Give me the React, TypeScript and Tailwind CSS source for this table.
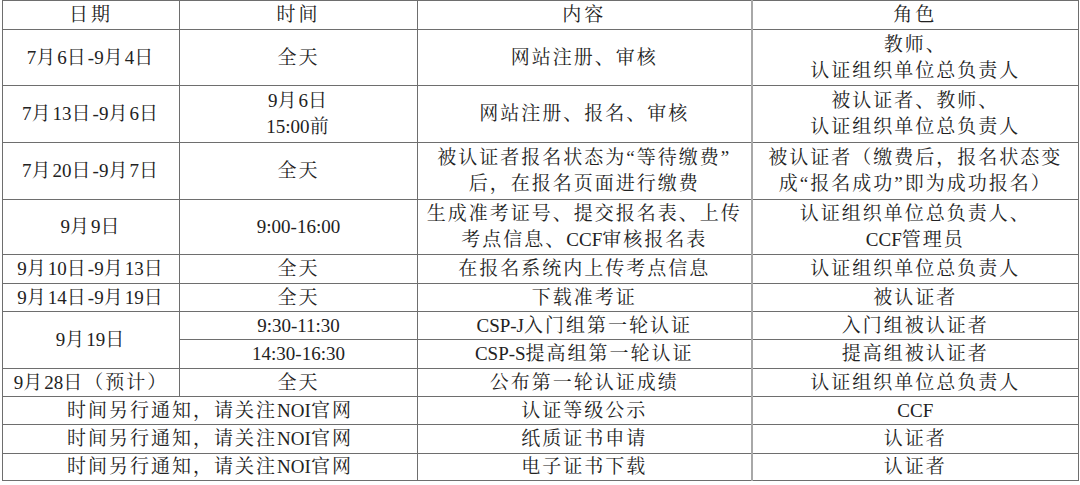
import React from 'react';

type Cell = {
  lines: string[];
  colSpan?: number;
  rowSpan?: number;
};

type Row = { h: string; cells: Cell[] };

const td = 'border border-[#6e6e6e] text-center align-middle p-0 leading-[26px] whitespace-nowrap';

// latin runs keep normal spacing, CJK gets the wide Word-like tracking
const renderLine = (line: string) =>
  line.split(/([A-Za-z0-9:\-]+)/).map((part, k) =>
    /^[A-Za-z0-9:\-]+$/.test(part) ? (
      <span key={k} className="tracking-normal">
        {part}
      </span>
    ) : (
      <span key={k} className="tracking-[2px]">
        {part}
      </span>
    )
  );

const rows: Row[] = [
  {
    h: 'h-[56px]',
    cells: [
      { lines: ['7月6日-9月4日'] },
      { lines: ['全天'] },
      { lines: ['网站注册、审核'] },
      { lines: ['教师、', '认证组织单位总负责人'] },
    ],
  },
  {
    h: 'h-[57px]',
    cells: [
      { lines: ['7月13日-9月6日'] },
      { lines: ['9月6日', '15:00前'] },
      { lines: ['网站注册、报名、审核'] },
      { lines: ['被认证者、教师、', '认证组织单位总负责人'] },
    ],
  },
  {
    h: 'h-[57px]',
    cells: [
      { lines: ['7月20日-9月7日'] },
      { lines: ['全天'] },
      { lines: ['被认证者报名状态为“等待缴费”', '后，在报名页面进行缴费'] },
      { lines: ['被认证者（缴费后，报名状态变', '成“报名成功”即为成功报名）'] },
    ],
  },
  {
    h: 'h-[55px]',
    cells: [
      { lines: ['9月9日'] },
      { lines: ['9:00-16:00'] },
      { lines: ['生成准考证号、提交报名表、上传', '考点信息、CCF审核报名表'] },
      { lines: ['认证组织单位总负责人、', 'CCF管理员'] },
    ],
  },
  {
    h: 'h-[29px]',
    cells: [
      { lines: ['9月10日-9月13日'] },
      { lines: ['全天'] },
      { lines: ['在报名系统内上传考点信息'] },
      { lines: ['认证组织单位总负责人'] },
    ],
  },
  {
    h: 'h-[28px]',
    cells: [
      { lines: ['9月14日-9月19日'] },
      { lines: ['全天'] },
      { lines: ['下载准考证'] },
      { lines: ['被认证者'] },
    ],
  },
  {
    h: 'h-[28px]',
    cells: [
      { lines: ['9月19日'], rowSpan: 2 },
      { lines: ['9:30-11:30'] },
      { lines: ['CSP-J入门组第一轮认证'] },
      { lines: ['入门组被认证者'] },
    ],
  },
  {
    h: 'h-[29px]',
    cells: [
      { lines: ['14:30-16:30'] },
      { lines: ['CSP-S提高组第一轮认证'] },
      { lines: ['提高组被认证者'] },
    ],
  },
  {
    h: 'h-[28px]',
    cells: [
      { lines: ['9月28日（预计）'] },
      { lines: ['全天'] },
      { lines: ['公布第一轮认证成绩'] },
      { lines: ['认证组织单位总负责人'] },
    ],
  },
  {
    h: 'h-[28px]',
    cells: [
      { lines: ['时间另行通知，请关注NOI官网'], colSpan: 2 },
      { lines: ['认证等级公示'] },
      { lines: ['CCF'] },
    ],
  },
  {
    h: 'h-[29px]',
    cells: [
      { lines: ['时间另行通知，请关注NOI官网'], colSpan: 2 },
      { lines: ['纸质证书申请'] },
      { lines: ['认证者'] },
    ],
  },
  {
    h: 'h-[27px]',
    cells: [
      { lines: ['时间另行通知，请关注NOI官网'], colSpan: 2 },
      { lines: ['电子证书下载'] },
      { lines: ['认证者'] },
    ],
  },
];

export default function App() {
  return (
    <div className="w-[1080px] h-[485px] bg-white pl-[2px] text-[#222] text-[19px] font-['Liberation_Serif','Noto_Serif_CJK_SC','Noto_Sans_CJK_SC',serif]">
      <table className="border-collapse table-fixed w-[1076px]">
        <colgroup>
          <col className="w-[177px]" />
          <col className="w-[238px]" />
          <col className="w-[334px]" />
          <col className="w-[327px]" />
        </colgroup>
        <thead>
          <tr className="h-[29px]">
            <th className={`${td} font-normal tracking-[3px]`}>日期</th>
            <th className={`${td} font-normal tracking-[3px]`}>时间</th>
            <th className={`${td} font-normal tracking-[3px]`}>内容</th>
            <th className={`${td} font-normal tracking-[3px] border-l-2 border-l-[#a8a8a8]`}>角色</th>
          </tr>
        </thead>
        <tbody>
          {rows.map((row, i) => (
            <tr key={i} className={row.h}>
              {row.cells.map((c, j) => {
                const isLast = j === row.cells.length - 1;
                return (
                  <td
                    key={j}
                    colSpan={c.colSpan}
                    rowSpan={c.rowSpan}
                    className={`${td} ${isLast ? 'border-l-2 border-l-[#a8a8a8]' : ''}`}
                  >
                    {c.lines.map((line, k) => (
                      <React.Fragment key={k}>
                        {k > 0 && <br />}
                        {renderLine(line)}
                      </React.Fragment>
                    ))}
                  </td>
                );
              })}
            </tr>
          ))}
        </tbody>
      </table>
    </div>
  );
}
